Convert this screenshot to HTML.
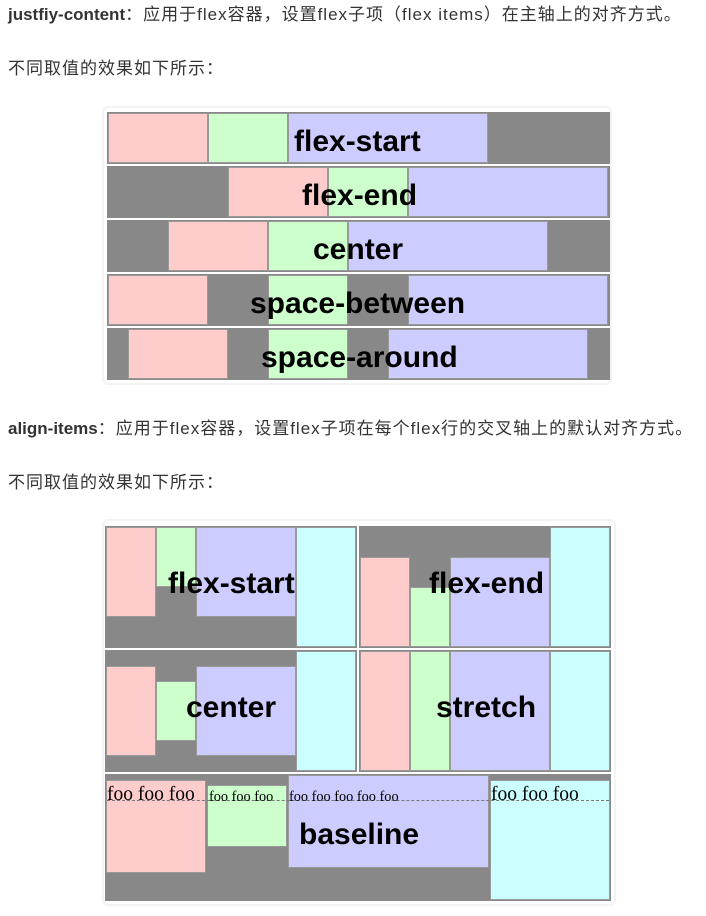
<!DOCTYPE html>
<html><head><meta charset="utf-8"><style>
body{margin:0;width:706px;height:916px;background:#fff;position:relative;overflow:hidden;font-family:"Liberation Sans","Noto Sans CJK SC",sans-serif;color:#333}
.t{position:absolute;left:8px;font-size:17px;white-space:nowrap;line-height:20px}
.t span{letter-spacing:1px}
.a{position:absolute;box-sizing:border-box}
.g{background:#888}
.p{background:#fcc;border:1px solid #999}
.n{background:#cfc;border:1px solid #999}
.u{background:#ccf;border:1px solid #999}
.c{background:#cff;border:1px solid #999}
.f{position:absolute;border:2px solid #f3f3f3;border-radius:6px;box-sizing:border-box}
.L{position:absolute;font:bold 30px "Liberation Sans",sans-serif;color:#000;white-space:nowrap;line-height:30px;margin-top:2px}
.foo{position:absolute;font:15px "Liberation Serif",serif;color:#000;white-space:nowrap;line-height:16px}
.d{position:absolute;border-top:1px dashed #777;height:0}
</style></head><body>
<div class="t" style="top:5px"><b>justfiy-content</b><span>：应用于flex容器，设置flex子项（flex items）在主轴上的对齐方式。</span></div>
<div class="t" style="top:59px"><span>不同取值的效果如下所示：</span></div>

<div class="f" style="left:102px;top:106px;width:510px;height:279px"></div>
<div class="a g" style="left:107px;top:112px;width:503px;height:52px"></div>
<div class="a p" style="left:108px;top:113px;width:100px;height:50px"></div>
<div class="a n" style="left:208px;top:113px;width:80px;height:50px"></div>
<div class="a u" style="left:288px;top:113px;width:200px;height:50px"></div>
<div class="L" style="left:294px;top:125px">flex-start</div>

<div class="a g" style="left:107px;top:166px;width:503px;height:52px"></div>
<div class="a p" style="left:228px;top:167px;width:100px;height:50px"></div>
<div class="a n" style="left:328px;top:167px;width:80px;height:50px"></div>
<div class="a u" style="left:408px;top:167px;width:200px;height:50px"></div>
<div class="L" style="left:302px;top:179px">flex-end</div>

<div class="a g" style="left:107px;top:220px;width:503px;height:52px"></div>
<div class="a p" style="left:168px;top:221px;width:100px;height:50px"></div>
<div class="a n" style="left:268px;top:221px;width:80px;height:50px"></div>
<div class="a u" style="left:348px;top:221px;width:200px;height:50px"></div>
<div class="L" style="left:313px;top:233px">center</div>

<div class="a g" style="left:107px;top:274px;width:503px;height:52px"></div>
<div class="a p" style="left:108px;top:275px;width:100px;height:50px"></div>
<div class="a n" style="left:268px;top:275px;width:80px;height:50px"></div>
<div class="a u" style="left:408px;top:275px;width:200px;height:50px"></div>
<div class="L" style="left:250px;top:287px">space-between</div>

<div class="a g" style="left:107px;top:328px;width:503px;height:52px"></div>
<div class="a p" style="left:128px;top:329px;width:100px;height:50px"></div>
<div class="a n" style="left:268px;top:329px;width:80px;height:50px"></div>
<div class="a u" style="left:388px;top:329px;width:200px;height:50px"></div>
<div class="L" style="left:261px;top:341px">space-around</div>

<div class="t" style="top:419px"><b>align-items</b><span>：应用于flex容器，设置flex子项在每个flex行的交叉轴上的默认对齐方式。</span></div>
<div class="t" style="top:473px"><span>不同取值的效果如下所示：</span></div>

<div class="f" style="left:102px;top:519px;width:514px;height:387px"></div>
<div class="a g" style="left:105px;top:526px;width:252px;height:122px"></div>
<div class="a p" style="left:106px;top:527px;width:50px;height:90px"></div>
<div class="a n" style="left:156px;top:527px;width:40px;height:60px"></div>
<div class="a u" style="left:196px;top:527px;width:100px;height:90px"></div>
<div class="a c" style="left:296px;top:527px;width:60px;height:120px"></div>
<div class="L" style="left:168px;top:567px">flex-start</div>

<div class="a g" style="left:359px;top:526px;width:252px;height:122px"></div>
<div class="a p" style="left:360px;top:557px;width:50px;height:90px"></div>
<div class="a n" style="left:410px;top:587px;width:40px;height:60px"></div>
<div class="a u" style="left:450px;top:557px;width:100px;height:90px"></div>
<div class="a c" style="left:550px;top:527px;width:60px;height:120px"></div>
<div class="L" style="left:429px;top:567px">flex-end</div>

<div class="a g" style="left:105px;top:650px;width:252px;height:122px"></div>
<div class="a p" style="left:106px;top:666px;width:50px;height:90px"></div>
<div class="a n" style="left:156px;top:681px;width:40px;height:60px"></div>
<div class="a u" style="left:196px;top:666px;width:100px;height:90px"></div>
<div class="a c" style="left:296px;top:651px;width:60px;height:120px"></div>
<div class="L" style="left:186px;top:691px">center</div>

<div class="a g" style="left:359px;top:650px;width:252px;height:122px"></div>
<div class="a p" style="left:360px;top:651px;width:50px;height:120px"></div>
<div class="a n" style="left:410px;top:651px;width:40px;height:120px"></div>
<div class="a u" style="left:450px;top:651px;width:100px;height:120px"></div>
<div class="a c" style="left:550px;top:651px;width:60px;height:120px"></div>
<div class="L" style="left:436px;top:691px">stretch</div>

<div class="a g" style="left:105px;top:774px;width:506px;height:127px"></div>
<div class="a p" style="left:106px;top:780px;width:100px;height:93px"></div>
<div class="a n" style="left:207px;top:785px;width:80px;height:62px"></div>
<div class="a u" style="left:288px;top:775px;width:201px;height:93px"></div>
<div class="a c" style="left:490px;top:780px;width:120px;height:120px"></div>
<div class="d" style="left:107px;top:800px;width:502px"></div>
<div class="foo" style="left:107px;top:786px;font-size:19.5px;line-height:18px">foo foo foo</div>
<div class="foo" style="left:209px;top:789px;font-size:14.3px">foo foo foo</div>
<div class="foo" style="left:289px;top:789px;font-size:14.3px">foo foo foo foo foo</div>
<div class="foo" style="left:491px;top:786px;font-size:19.5px;line-height:18px">foo foo foo</div>
<div class="L" style="left:299px;top:818px">baseline</div>
</body></html>
